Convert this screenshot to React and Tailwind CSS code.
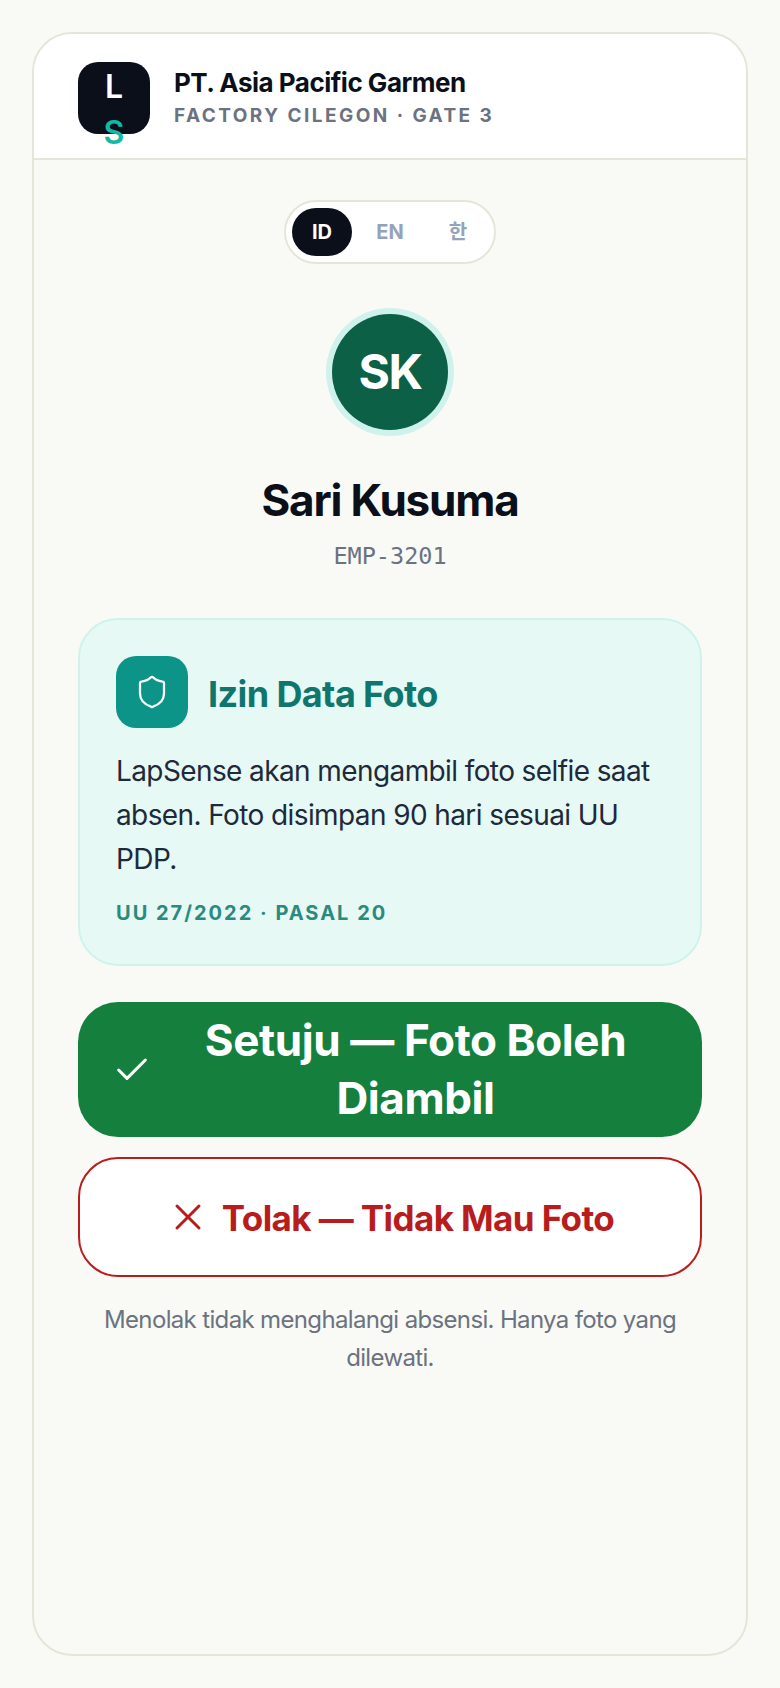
import { Check, X, Shield } from 'lucide-react';

const SANS = { fontFamily: 'Inter, "Noto Sans CJK KR", sans-serif' };

function Header() {
  return (
    <header className="flex items-center gap-6 bg-white px-[44px] pt-[28px] pb-[24px] border-b-2 border-[#e5e5d8] rounded-t-[38px]">
      <div className="w-[72px] h-[72px] rounded-[20px] bg-[#0a0f1a] flex flex-col items-center pt-[2px] shrink-0 overflow-visible">
        <span className="text-white text-[32px] leading-[46px] font-semibold">L</span>
        <span className="text-[#14b8a6] text-[32px] leading-[46px] font-semibold">S</span>
      </div>
      <div className="flex flex-col">
        <span className="text-[#0a0f1a] text-[26px] leading-[34px] font-bold tracking-[-0.5px]">PT. Asia Pacific Garmen</span>
        <span className="text-[#6b7280] text-[19px] leading-[28px] font-bold tracking-[2.45px] mt-[2px]">FACTORY CILEGON · GATE 3</span>
      </div>
    </header>
  );
}

function LangSwitch() {
  return (
    <div className="flex items-center self-center bg-white border-2 border-[#e5e5d8] rounded-full p-[6px] h-[64px] w-[212px]">
      <div className="w-[60px] h-[48px] rounded-full bg-[#0a0f1a] text-white text-[20px] font-bold flex items-center justify-center">ID</div>
      <div className="w-[76px] h-[48px] text-[#94a3b8] text-[20px] font-bold flex items-center justify-center">EN</div>
      <div className="w-[60px] h-[48px] text-[#94a3b8] text-[20px] font-bold flex items-center justify-center">한</div>
    </div>
  );
}

export default function App() {
  return (
    <div className="min-h-screen bg-[#f9faf5] p-[32px]" style={SANS}>
      <div className="h-[1624px] border-2 border-[#e5e5d8] rounded-[40px] flex flex-col">
        <Header />
        <main className="flex flex-col px-[44px] pt-[40px]">
          <LangSwitch />

          <div className="self-center mt-[50px] w-[116px] h-[116px] rounded-full bg-[#0b6045] ring-[6px] ring-[#cff3ec] flex items-center justify-center text-white text-[48px] font-bold tracking-[-1.5px]">
            SK
          </div>
          <h1 className="mt-[42px] text-center text-[#0a0f1a] text-[44px] leading-[56px] font-bold tracking-[-1.2px]">Sari Kusuma</h1>
          <p className="mt-[12px] text-center text-[#6b7280] text-[23.5px] leading-[32px]" style={{ fontFamily: '"DejaVu Sans Mono", monospace' }}>EMP-3201</p>

          <section className="mt-[46px] h-[348px] bg-[#e6f9f5] border-2 border-[#cff3ec] rounded-[40px] px-[36px] pt-[36px]">
            <div className="flex items-center gap-[20px]">
              <div className="w-[72px] h-[72px] rounded-[20px] bg-[#0d9488] flex items-center justify-center">
                <Shield size={36} color="white" strokeWidth={1.5} />
              </div>
              <h2 className="pt-[3px] text-[#0f766e] text-[36px] font-bold tracking-[-0.6px]">Izin Data Foto</h2>
            </div>
            <p className="mt-[21px] text-[#1e293b] text-[28px] leading-[44px] tracking-[-0.6px]">
              LapSense akan mengambil foto selfie saat absen. Foto disimpan 90 hari sesuai UU PDP.
            </p>
            <p className="mt-[18px] text-[#2b8a7e] text-[20px] leading-[28px] font-bold tracking-[2px]">UU 27/2022 · PASAL 20</p>
          </section>

          <button className="mt-[36px] h-[135px] bg-[#15803d] rounded-[40px] px-[34px] flex items-center gap-[11px] text-white">
            <Check size={40} strokeWidth={1.8} className="shrink-0" />
            <span className="flex-1 pb-[2px] text-center text-[44px] leading-[58px] font-bold tracking-[-0.4px]">Setuju — Foto Boleh Diambil</span>
          </button>

          <button className="mt-[20px] h-[120px] bg-white border-2 border-[#b91c1c] rounded-[40px] flex items-center justify-center gap-[12px] text-[#b91c1c]">
            <X size={44} strokeWidth={1.6} className="shrink-0" />
            <span className="pt-[3px] text-[35px] font-bold tracking-[-0.6px]">Tolak — Tidak Mau Foto</span>
          </button>

          <p className="mt-[24px] text-center text-[#6b7280] text-[24px] leading-[38px] px-[16px] tracking-[-0.65px]">
            Menolak tidak menghalangi absensi. Hanya foto yang dilewati.
          </p>
        </main>
      </div>
    </div>
  );
}
